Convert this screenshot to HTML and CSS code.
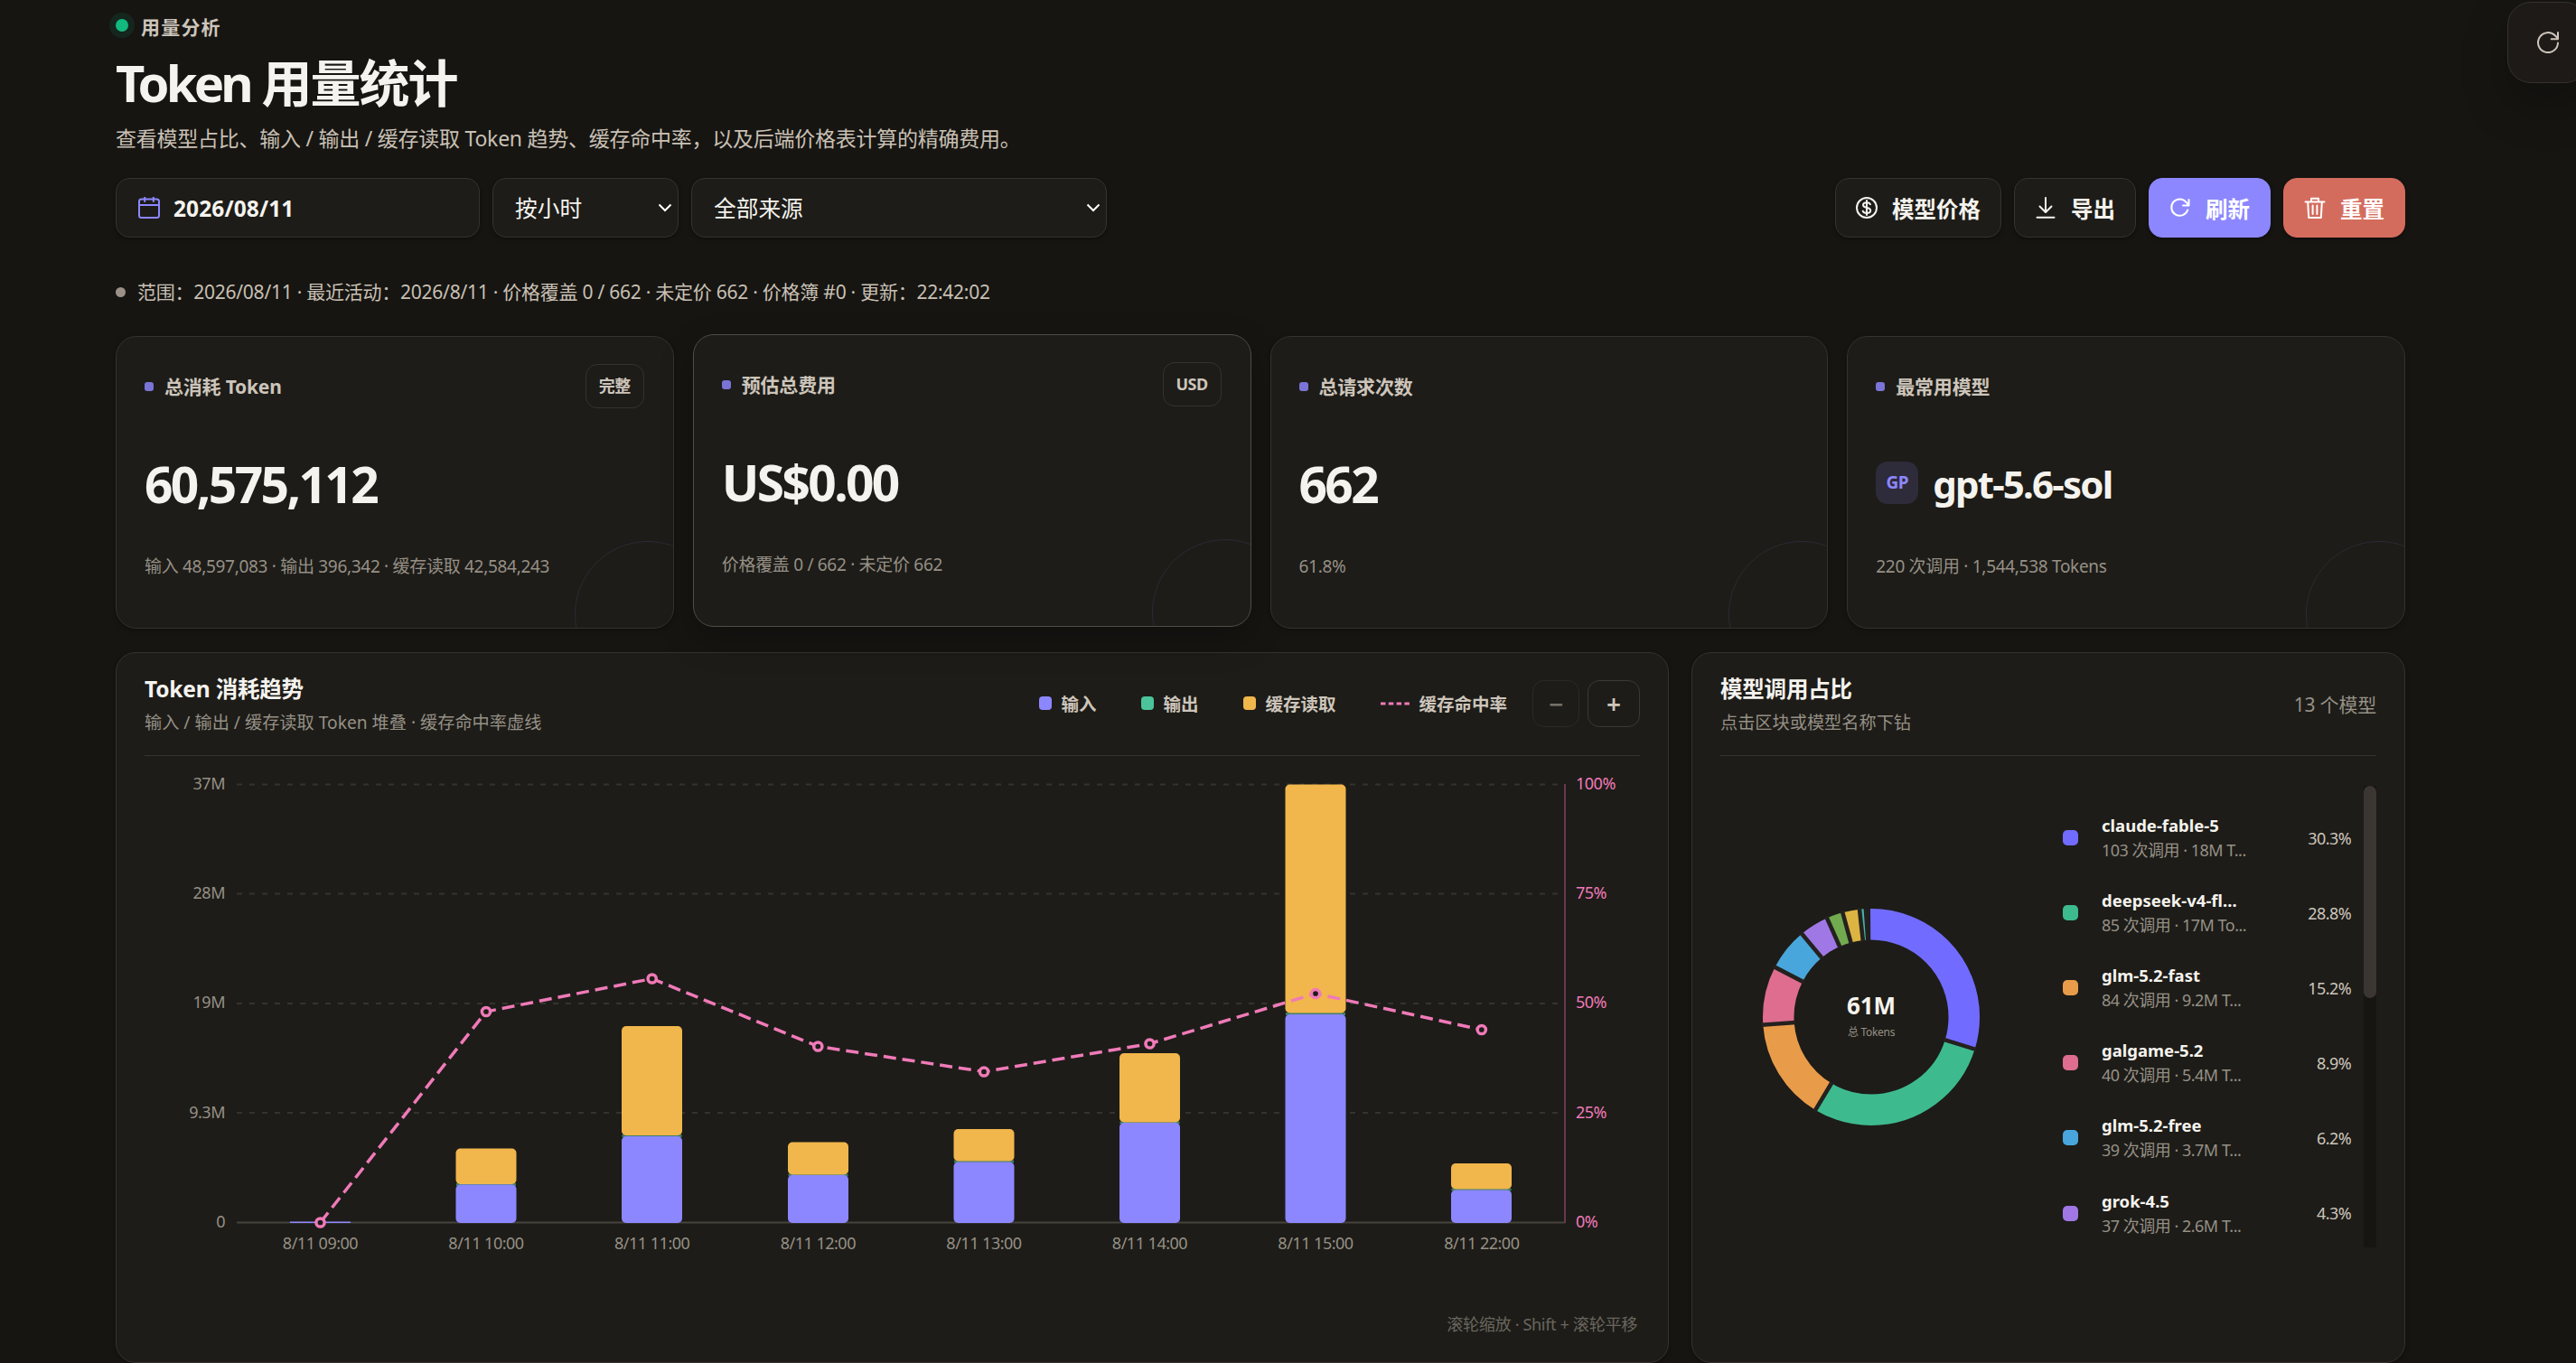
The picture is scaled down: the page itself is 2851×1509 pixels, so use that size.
FILE: index.html
```
<!DOCTYPE html>
<html lang="zh-CN">
  <head>
    <meta charset="UTF-8" />
    <meta name="viewport" content="width=device-width, initial-scale=1.0" />
    <title>Token 用量统计</title>
    <link rel="stylesheet" href="styles.css">
  </head>
  <body>
    <button class="floatRefresh" aria-label="刷新">
      <svg class="icon" viewBox="0 0 24 24"><path d="M23 12.5A11 11 0 1 1 19.8 4.3L23 7.5M23 1v7.3h-7.3" /></svg>
    </button>
    <main class="page">
      <header class="pageHeader">
        <p class="eyebrow"><span class="liveDot"></span>用量分析</p>
        <h1><span>Token</span> 用量统计</h1>
        <p class="intro">查看模型占比、输入 / 输出 / 缓存读取 Token 趋势、缓存命中率，以及后端价格表计算的精确费用。</p>
      </header>

      <div class="toolbar">
        <div class="dateBox">
          <svg class="icon" viewBox="0 0 24 24"><rect x="1" y="2.5" width="22" height="20.5" rx="2.5" /><path d="M1 9h22M7.2 0v5M16.8 0v5" /></svg>
          <span>2026/08/11</span>
        </div>
        <label class="selectBox selectHour">
          <select><option>按小时</option></select>
          <svg viewBox="0 0 16 10"><path d="M1.5 1.5 8 8l6.5-6.5" /></svg>
        </label>
        <label class="selectBox selectSource">
          <select><option>全部来源</option></select>
          <svg viewBox="0 0 16 10"><path d="M1.5 1.5 8 8l6.5-6.5" /></svg>
        </label>
        <div class="actions">
          <button class="btn btnPrice">
            <svg class="icon" viewBox="0 0 24 24"><circle cx="12" cy="12" r="11" /><path d="M12 4v16M16 8.2c-.6-1.2-2-1.9-4-1.9-2.4 0-4 1-4 2.8 0 4.2 8.2 1.6 8.2 5.8 0 1.9-1.8 2.9-4.2 2.9-2.2 0-3.8-.8-4.3-2.2" /></svg>
            <span>模型价格</span>
          </button>
          <button class="btn">
            <svg class="icon" viewBox="0 0 24 24"><path d="M12 1v15.5M5.5 10.5l6.5 6.5 6.5-6.5M2.500 22.7h19" /></svg>
            <span>导出</span>
          </button>
          <button class="btn btnPrimary">
            <svg class="icon" viewBox="0 0 24 24"><path d="M20.2 14.5A9.2 9.2 0 1 1 18.6 5.8L21.5 9M21.5 3v6.5H15" /></svg>
            <span>刷新</span>
          </button>
          <button class="btn btnDanger">
            <svg class="icon" viewBox="0 0 24 24"><path d="M1.5 5.5h21M8 5V1.8h8V5M4.2 6l1 17h13.6l1-17M9.6 9.5V19M14.4 9.5V19" /></svg>
            <span>重置</span>
          </button>
        </div>
      </div>

      <p class="status"><span class="statusDot"></span><span class="statusText">范围：2026/08/11 · 最近活动：2026/8/11 · 价格覆盖 0 / 662 · 未定价 662 · 价格簿 #0 · 更新：22:42:02</span></p>

      <section class="cards">
        <article class="card">
          <div class="cardHead"><h2>总消耗 Token</h2><span class="badge">完整</span></div>
          <p class="value">60,575,112</p>
          <p class="note">输入 48,597,083 · 输出 396,342 · 缓存读取 42,584,243</p>
        </article>
        <article class="card active">
          <div class="cardHead"><h2>预估总费用</h2><span class="badge">USD</span></div>
          <p class="value">US$0.00</p>
          <p class="note">价格覆盖 0 / 662 · 未定价 662</p>
        </article>
        <article class="card">
          <div class="cardHead"><h2>总请求次数</h2></div>
          <p class="value">662</p>
          <p class="note">61.8%</p>
        </article>
        <article class="card">
          <div class="cardHead"><h2>最常用模型</h2></div>
          <p class="value model"><span class="modelIcon">GP</span><span>gpt-5.6-sol</span></p>
          <p class="note">220 次调用 · 1,544,538 Tokens</p>
        </article>
      </section>

      <section class="panels">
        <article class="panel">
          <div class="panelHead">
            <div>
              <h3>Token 消耗趋势</h3>
              <p class="sub">输入 / 输出 / 缓存读取 Token 堆叠 · 缓存命中率虚线</p>
            </div>
            <div class="chartTools">
              <ul class="legend">
                <li><i class="swatch input"></i>输入</li>
                <li><i class="swatch output"></i>输出</li>
                <li><i class="swatch cache"></i>缓存读取</li>
                <li><svg class="dash" viewBox="0 0 32 4"><path d="M0 2h32" /></svg>缓存命中率</li>
              </ul>
              <button class="zoomBtn zoomOut" disabled>−</button>
              <button class="zoomBtn">+</button>
            </div>
          </div>
          <svg class="chart" viewBox="160 837 1656 583">
            <g class="grid">
              <path d="M262 868.5H1732M262 989.5H1732M262 1111H1732M262 1232H1732" />
            </g>
            <path class="axis" d="M262 1353.5H1732" />
            <path class="axisRate" d="M1732 868V1354" />
            <g class="yLabels">
              <text x="249" y="874">37M</text>
              <text x="249" y="995">28M</text>
              <text x="249" y="1116">19M</text>
              <text x="249" y="1238">9.3M</text>
              <text x="249" y="1359">0</text>
            </g>
            <g class="rateLabels">
              <text x="1744" y="874">100%</text>
              <text x="1744" y="995">75%</text>
              <text x="1744" y="1116">50%</text>
              <text x="1744" y="1238">25%</text>
              <text x="1744" y="1359">0%</text>
            </g>
            <g class="xLabels">
              <text x="354.5" y="1383">8/11 09:00</text>
              <text x="538" y="1383">8/11 10:00</text>
              <text x="721.7" y="1383">8/11 11:00</text>
              <text x="905.3" y="1383">8/11 12:00</text>
              <text x="1089" y="1383">8/11 13:00</text>
              <text x="1272.5" y="1383">8/11 14:00</text>
              <text x="1456" y="1383">8/11 15:00</text>
              <text x="1639.8" y="1383">8/11 22:00</text>
            </g>
            <g class="barOutput">
              <rect x="505" y="1310" width="66" height="3" />
              <rect x="688.5" y="1256" width="66" height="3" />
              <rect x="872.5" y="1299.5" width="66" height="3" />
              <rect x="1056" y="1284.5" width="66" height="3" />
              <rect x="1239.5" y="1241.5" width="66" height="3" />
              <rect x="1423" y="1121" width="66" height="3" />
              <rect x="1606.5" y="1315.5" width="66" height="3" />
            </g>
            <g class="barInput">
              <rect x="321" y="1352.5" width="67" height="1.5" />
              <rect x="504.5" y="1311.5" width="67" height="42.5" rx="5" />
              <rect x="688" y="1258" width="67" height="96" rx="5" />
              <rect x="872" y="1301" width="67" height="53" rx="5" />
              <rect x="1055.5" y="1286.5" width="67" height="67.5" rx="5" />
              <rect x="1239" y="1243" width="67" height="111" rx="5" />
              <rect x="1422.5" y="1123" width="67" height="231" rx="5" />
              <rect x="1606" y="1317.5" width="67" height="36.5" rx="5" />
            </g>
            <g class="barCache">
              <rect x="504.5" y="1271.5" width="67" height="39.5" rx="5" />
              <rect x="688" y="1136" width="67" height="121" rx="5" />
              <rect x="872" y="1264.5" width="67" height="36" rx="5" />
              <rect x="1055.5" y="1250" width="67" height="35.5" rx="5" />
              <rect x="1239" y="1166" width="67" height="76.5" rx="5" />
              <rect x="1422.5" y="868.5" width="67" height="253" rx="5" />
              <rect x="1606" y="1288" width="67" height="28.5" rx="5" />
            </g>
            <polyline class="rateLine" points="354.5,1353.5 538,1120 721.7,1083.5 905.3,1158.5 1089,1186.5 1272.5,1155.5 1456,1100 1639.8,1140" />
            <g class="rateDots">
              <circle cx="354.5" cy="1353.5" r="4.6" />
              <circle cx="538" cy="1120" r="4.6" />
              <circle cx="721.7" cy="1083.5" r="4.6" />
              <circle cx="905.3" cy="1158.5" r="4.6" />
              <circle cx="1089" cy="1186.5" r="4.6" />
              <circle cx="1272.5" cy="1155.5" r="4.6" />
              <circle cx="1456" cy="1100" r="4.6" />
              <circle cx="1639.8" cy="1140" r="4.6" />
            </g>
          </svg>
          <p class="hint">滚轮缩放 · Shift + 滚轮平移</p>
        </article>

        <article class="panel">
          <div class="panelHead">
            <div>
              <h3>模型调用占比</h3>
              <p class="sub">点击区块或模型名称下钻</p>
            </div>
            <span class="count">13 个模型</span>
          </div>
          <div class="share">
            <svg class="donut" viewBox="-125 -125 250 250">
              <!-- one turn of each ring is 360 units -->
              <g class="ring" transform="rotate(-90)">
                <circle class="track" r="102.8" pathLength="360" />
                <circle stroke="#716cff" r="102.8" pathLength="360" stroke-dasharray="107.7 252.3" stroke-dashoffset="0.5" />
                <circle stroke="#3dbb8f" r="102.8" pathLength="360" stroke-dasharray="103.8 256.2" stroke-dashoffset="-107.2" />
                <circle stroke="#e89c4a" r="102.8" pathLength="360" stroke-dasharray="54.9 305.1" stroke-dashoffset="-211" />
                <circle stroke="#de6d8f" r="102.8" pathLength="360" stroke-dasharray="31.5 328.5" stroke-dashoffset="-265.9" />
                <circle stroke="#49a6dc" r="102.8" pathLength="360" stroke-dasharray="22.8 337.2" stroke-dashoffset="-297.4" />
                <circle stroke="#a078e6" r="102.8" pathLength="360" stroke-dasharray="15.7 344.3" stroke-dashoffset="-320.2" />
                <circle stroke="#72aa50" r="102.8" pathLength="360" stroke-dasharray="8.8 351.2" stroke-dashoffset="-335.9" />
                <circle stroke="#dcb441" r="102.8" pathLength="360" stroke-dasharray="9.1 350.9" stroke-dashoffset="-344.7" />
                <circle stroke="#45b3ac" r="102.8" pathLength="360" stroke-dasharray="2.1 357.9" stroke-dashoffset="-353.8" />
              </g>
              <g class="gaps">
                <path d="M0-84v-38" transform="rotate(107.2)" />
                <path d="M0-84v-38" transform="rotate(211)" />
                <path d="M0-84v-38" transform="rotate(265.9)" />
                <path d="M0-84v-38" transform="rotate(297.4)" />
                <path d="M0-84v-38" transform="rotate(320.2)" />
                <path d="M0-84v-38" transform="rotate(335.9)" />
                <path d="M0-84v-38" transform="rotate(344.7)" />
                <path d="M0-84v-38" transform="rotate(353.8)" />
              </g>
              <text class="donutTotal" y="-3.5">61M</text>
              <text class="donutLabel" y="20.5">总 Tokens</text>
            </svg>
            <ul class="models">
              <li><i class="swatch c1"></i><div><b>claude-fable-5</b><small>103 次调用 · 18M T...</small></div><em>30.3%</em></li>
              <li><i class="swatch c2"></i><div><b>deepseek-v4-fl...</b><small>85 次调用 · 17M To...</small></div><em>28.8%</em></li>
              <li><i class="swatch c3"></i><div><b>glm-5.2-fast</b><small>84 次调用 · 9.2M T...</small></div><em>15.2%</em></li>
              <li><i class="swatch c4"></i><div><b>galgame-5.2</b><small>40 次调用 · 5.4M T...</small></div><em>8.9%</em></li>
              <li><i class="swatch c5"></i><div><b>glm-5.2-free</b><small>39 次调用 · 3.7M T...</small></div><em>6.2%</em></li>
              <li><i class="swatch c6"></i><div><b>grok-4.5</b><small>37 次调用 · 2.6M T...</small></div><em>4.3%</em></li>
            </ul>
            <div class="scrollbar"><span></span></div>
          </div>
        </article>
      </section>
    </main>
  </body>
</html>
```
FILE: styles.css
```
* {
  padding: 0;
  margin: 0;
  box-sizing: border-box;
}
body {
  height: 1509px;
  overflow: hidden;
  position: relative;
  background: #161512;
  color: #f5f3ee;
  font-family: "Noto Sans", "Noto Sans CJK SC", sans-serif;
}
button,
select {
  font-family: inherit;
  color: inherit;
}
ul {
  list-style: none;
}
.icon {
  width: 24px;
  height: 24px;
  flex: none;
  fill: none;
  stroke: currentColor;
  stroke-width: 2;
  stroke-linecap: round;
  stroke-linejoin: round;
}
.page {
  width: 2534px;
  margin-left: 128px;
  padding-top: 16px;
}

/* header */
.eyebrow {
  display: flex;
  align-items: center;
  font-size: 21px;
  line-height: 28px;
  font-weight: 700;
  letter-spacing: 1.2px;
  color: #cdc5bb;
}
.liveDot {
  width: 14px;
  height: 14px;
  margin: -4px 14px 0 0;
  border-radius: 50%;
  background: #12b981;
  box-shadow: 0 0 0 7px #15261e;
}
h1 {
  margin-top: 15px;
  font-size: 56px;
  line-height: 64px;
  letter-spacing: -2px;
}
h1 span {
  letter-spacing: -3.8px;
}
.intro {
  margin-top: 12px;
  font-size: 23px;
  line-height: 36px;
  letter-spacing: -0.25px;
  color: #c9c0b4;
}

/* toolbar */
.toolbar {
  display: flex;
  gap: 14px;
  height: 66px;
  margin-top: 26px;
}
.dateBox,
.selectBox,
.btn {
  display: flex;
  align-items: center;
  border: 1px solid #35332e;
  border-radius: 15px;
  background: #1d1c18;
  box-shadow: 0 2px 4px rgba(0, 0, 0, 0.35);
}
.dateBox {
  width: 403px;
  padding-left: 24px;
  gap: 15px;
  font-size: 24.5px;
  font-weight: 700;
  letter-spacing: 0.1px;
}
.dateBox .icon {
  color: #8d87ff;
}
.selectBox {
  padding-right: 6px;
}
.selectHour {
  width: 206px;
}
.selectSource {
  width: 460px;
}
.selectBox select {
  flex: 1;
  padding-left: 24px;
  border: none;
  outline: none;
  appearance: none;
  background: none;
  font-size: 24.7px;
}
.selectBox svg {
  width: 16px;
  height: 10px;
  fill: none;
  stroke: #fff;
  stroke-width: 2;
}
.actions {
  display: flex;
  gap: 14px;
  margin-left: auto;
}
.btn {
  width: 135px;
  justify-content: center;
  gap: 16px;
  font-size: 24.5px;
  font-weight: 700;
}
.btnPrice {
  width: 184px;
}
.btnPrimary {
  border-color: #8d87ff;
  background: #8d87ff;
  color: #fff;
}
.btnDanger {
  border-color: #d46c5d;
  background: #d46c5d;
  color: #fff;
}

/* status line */
.status {
  display: flex;
  align-items: center;
  gap: 13px;
  margin-top: 45px;
  font-size: 21px;
  line-height: 30px;
  letter-spacing: -0.25px;
  color: #c9c0b4;
}
.statusDot {
  width: 11px;
  height: 11px;
  border-radius: 50%;
  background: #9b9187;
}

/* cards */
.cards {
  display: grid;
  grid-template-columns: repeat(4, 1fr);
  gap: 21px;
  margin-top: 34px;
}
.card {
  position: relative;
  overflow: hidden;
  height: 324px;
  padding: 30px 32px 30px 31px;
  border: 1px solid #35332e;
  border-radius: 23px;
  background: #1d1c18;
  box-shadow: 0 2px 5px rgba(0, 0, 0, 0.3);
}
.card::after {
  content: "";
  position: absolute;
  right: -53px;
  bottom: -66px;
  width: 160px;
  height: 160px;
  border: 1.5px solid #2d2a36;
  border-radius: 50%;
}
.card.active {
  transform: translateY(-2px);
  border-color: #504d47;
  box-shadow: 0 14px 36px rgba(0, 0, 0, 0.25);
}
.cardHead {
  display: flex;
  align-items: center;
  justify-content: space-between;
  height: 49px;
}
.cardHead h2 {
  display: flex;
  align-items: center;
  gap: 12px;
  font-size: 21px;
  line-height: 30px;
  letter-spacing: -0.2px;
  color: #cdc5bb;
}
.cardHead h2::before {
  content: "";
  width: 10px;
  height: 10px;
  border-radius: 3px;
  background: #7a74d6;
}
.badge {
  width: 65px;
  border: 1px solid #35332e;
  border-radius: 13px;
  text-align: center;
  font-size: 18px;
  line-height: 47px;
  font-weight: 700;
  letter-spacing: -0.5px;
  color: #cdc5bb;
}
.value {
  margin-top: 54px;
  height: 60px;
  font-size: 55px;
  line-height: 60px;
  font-weight: 700;
  letter-spacing: -2.6px;
}
.model {
  display: flex;
  gap: 16px;
  font-size: 42px;
  letter-spacing: -1.8px;
}
.modelIcon {
  width: 47px;
  height: 47px;
  margin-top: 5px;
  border-radius: 13px;
  background: #2e2b3a;
  color: #8d87ff;
  text-align: center;
  font-size: 19px;
  line-height: 47px;
  letter-spacing: -0.5px;
}
.note {
  margin-top: 47px;
  font-size: 19px;
  line-height: 28px;
  letter-spacing: -0.3px;
  color: #969086;
}

/* panels */
.panels {
  display: grid;
  grid-template-columns: 1719px 790px;
  gap: 25px;
  margin-top: 26px;
}
.panel {
  height: 787px;
  padding: 0 31px;
  border: 1px solid #35332e;
  border-radius: 22px;
  background: #1d1c18;
  box-shadow: 0 2px 5px rgba(0, 0, 0, 0.3);
}
.panelHead {
  display: flex;
  align-items: center;
  justify-content: space-between;
  height: 114px;
  border-bottom: 1px solid #35332e;
}
h3 {
  font-size: 24.5px;
  line-height: 36px;
  letter-spacing: -0.2px;
}
.sub {
  margin-top: 5px;
  font-size: 19.2px;
  line-height: 28px;
  color: #969086;
}
.count {
  margin-top: -2px;
  font-size: 21px;
  letter-spacing: -0.2px;
  color: #969086;
}
.chartTools,
.legend,
.legend li {
  display: flex;
  align-items: center;
}
.legend {
  gap: 50px;
  margin: -2px 28px 0 0;
}
.legend li {
  gap: 10px;
  font-size: 19.5px;
  font-weight: 700;
  color: #cdc5bb;
}
.swatch {
  width: 14px;
  height: 15px;
  flex: none;
  border-radius: 4px;
}
.dash {
  width: 32px;
  height: 4px;
  stroke: #f07ab8;
  stroke-width: 3;
  stroke-dasharray: 5.5 3.3;
}
.input {
  background: #8d87ff;
}
.output {
  background: #4bc49b;
}
.cache {
  background: #f1b64c;
}
.zoomBtn {
  width: 58px;
  height: 52px;
  margin-top: -1px;
  border: 1px solid #3b3933;
  border-radius: 13px;
  background: none;
  font-size: 28px;
  font-weight: 600;
  color: #cdc5bb;
}
.zoomOut {
  width: 52px;
  margin-right: 9px;
  opacity: 0.5;
}

/* trend chart */
.chart {
  display: block;
  width: 1656px;
  height: 583px;
  font-size: 18px;
}
.chart text {
  letter-spacing: -0.5px;
  fill: #969086;
}
.grid {
  fill: none;
  stroke: #35332e;
  stroke-width: 2;
  stroke-dasharray: 6 8;
}
.axis {
  stroke: #46423d;
  stroke-width: 2;
}
.axisRate {
  stroke: #69384f;
  stroke-width: 2;
}
.yLabels {
  text-anchor: end;
}
.xLabels {
  text-anchor: middle;
}
.chart .rateLabels text {
  fill: #f07ab8;
}
.barInput {
  fill: #8d87ff;
}
.barCache {
  fill: #f1b64c;
}
.barOutput {
  fill: #3f7f67;
}
.rateLine {
  fill: none;
  stroke: #f07ab8;
  stroke-width: 3.5;
  stroke-dasharray: 14 7;
}
.rateDots {
  fill: #1d1c18;
  stroke: #f07ab8;
  stroke-width: 3.5;
}
.hint {
  margin: 31px 3px 0 0;
  text-align: right;
  font-size: 18.2px;
  line-height: 30px;
  letter-spacing: -0.4px;
  color: #6a665f;
}

/* model share */
.share {
  display: flex;
  align-items: center;
  height: 511px;
  margin-top: 33px;
}
.donut {
  width: 250px;
  height: 250px;
  margin: 0 87px 0 42px;
}
.ring {
  fill: none;
  stroke-width: 34.5;
}
.track {
  stroke: #221f1e;
}
.gaps {
  stroke: #24211f;
  stroke-width: 4.6;
}
.donut text {
  text-anchor: middle;
}
.donutTotal {
  font-size: 26px;
  font-weight: 700;
  fill: #f5f3ee;
}
.donutLabel {
  font-size: 12px;
  letter-spacing: -0.3px;
  fill: #969086;
}
.models {
  flex: 1;
  align-self: flex-start;
  padding-top: 16px;
}
.models li {
  display: flex;
  align-items: center;
  height: 83.1px;
}
.models .swatch {
  width: 17px;
  height: 17px;
  border-radius: 5px;
  margin-right: 26px;
}
.models div {
  flex: 1;
}
.models b,
.models small {
  display: block;
  line-height: 27px;
}
.models b {
  font-size: 18.5px;
}
.models small {
  margin-top: 1px;
  font-size: 18px;
  letter-spacing: -0.5px;
  color: #969086;
}
.models em {
  font-style: normal;
  font-size: 18px;
  letter-spacing: -0.6px;
  color: #cdc5bb;
}
.c1 {
  background: #716cff;
}
.c2 {
  background: #3dbb8f;
}
.c3 {
  background: #e89c4a;
}
.c4 {
  background: #de6d8f;
}
.c5 {
  background: #49a6dc;
}
.c6 {
  background: #a078e6;
}
.scrollbar {
  width: 14px;
  height: 511px;
  margin-left: 14px;
  background: #161512;
}
.scrollbar span {
  display: block;
  height: 235px;
  border-radius: 7px;
  background: #3b3631;
}

/* floating button, partly off the right edge */
.floatRefresh {
  position: absolute;
  top: 2px;
  right: -14px;
  width: 90px;
  height: 90px;
  display: flex;
  align-items: center;
  justify-content: center;
  border: 1px solid #35322e;
  border-radius: 26px;
  background: #1e1a17;
  box-shadow: 0 24px 50px rgba(0, 0, 0, 0.25);
  color: #cdc5bb;
}
```
